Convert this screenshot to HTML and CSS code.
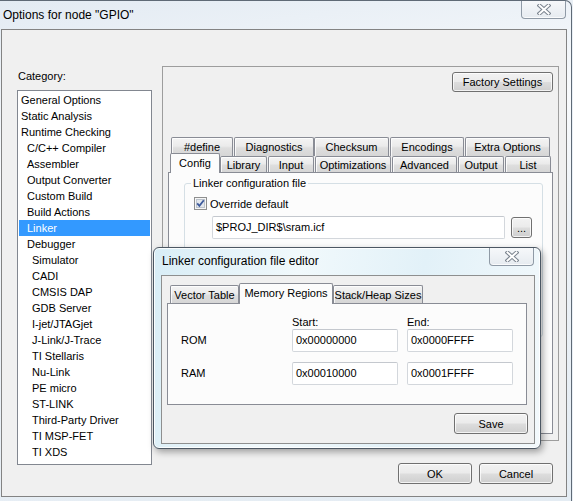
FILE: index.html
```html
<!DOCTYPE html>
<html>
<head>
<meta charset="utf-8">
<title>Options for node "GPIO"</title>
<link rel="stylesheet" href="styles.css">
</head>
<body>
<div class="frame">
  <div class="titlebar">
    <span class="title">Options for node "GPIO"</span>
    <div class="close">
      <svg width="14" height="11" viewBox="0 0 14 11"><path d="M2.5 1.5 L11.5 9.5 M11.5 1.5 L2.5 9.5" stroke="#7a838e" stroke-width="4" stroke-linecap="square" fill="none"/><path d="M2.5 1.5 L11.5 9.5 M11.5 1.5 L2.5 9.5" stroke="#ffffff" stroke-width="2" stroke-linecap="square" fill="none"/></svg>
    </div>
  </div>
  <div class="client">
    <div class="category">
      <div class="cat-label">Category:</div>
      <ul class="list">
        <li>General Options</li>
        <li>Static Analysis</li>
        <li>Runtime Checking</li>
        <li class="l1">C/C++ Compiler</li>
        <li class="l1">Assembler</li>
        <li class="l1">Output Converter</li>
        <li class="l1">Custom Build</li>
        <li class="l1">Build Actions</li>
        <li class="l1 sel">Linker</li>
        <li class="l1">Debugger</li>
        <li class="l2">Simulator</li>
        <li class="l2">CADI</li>
        <li class="l2">CMSIS DAP</li>
        <li class="l2">GDB Server</li>
        <li class="l2">I-jet/JTAGjet</li>
        <li class="l2">J-Link/J-Trace</li>
        <li class="l2">TI Stellaris</li>
        <li class="l2">Nu-Link</li>
        <li class="l2">PE micro</li>
        <li class="l2">ST-LINK</li>
        <li class="l2">Third-Party Driver</li>
        <li class="l2">TI MSP-FET</li>
        <li class="l2">TI XDS</li>
      </ul>
    </div>
    <div class="panel">
      <div class="panel-top"><button class="btn factory">Factory Settings</button></div>
      <div class="tabrow back">
        <div class="tab t-define">#define</div>
        <div class="tab t-diag">Diagnostics</div>
        <div class="tab t-check">Checksum</div>
        <div class="tab t-enc">Encodings</div>
        <div class="tab t-extra">Extra Options</div>
      </div>
      <div class="tabrow front">
        <div class="tab sel t-config">Config</div>
        <div class="tab t-lib">Library</div>
        <div class="tab t-input">Input</div>
        <div class="tab t-opt">Optimizations</div>
        <div class="tab t-adv">Advanced</div>
        <div class="tab t-out">Output</div>
        <div class="tab t-list">List</div>
      </div>
      <div class="page">
        <fieldset class="group">
          <legend>Linker configuration file</legend>
          <div class="check-row">
            <svg class="checkbox" width="13" height="13" viewBox="0 0 13 13"><rect x="0.5" y="0.5" width="12" height="12" fill="#f6f6f6" stroke="#8e8f8f"/><rect x="2.5" y="2.5" width="8" height="8" fill="#e3e7ec" stroke="#bcc3cc"/><path d="M3.2 6.4 L5.4 8.9 L9.8 3.2" fill="none" stroke="#3d5a9c" stroke-width="1.8"/></svg>
            <span>Override default</span>
          </div>
          <div class="path-row">
            <div class="field path">$PROJ_DIR$\sram.icf</div>
            <button class="btn dots">...</button>
          </div>
        </fieldset>
      </div>
    </div>
    <div class="footer">
      <button class="btn action">OK</button>
      <button class="btn action">Cancel</button>
    </div>
  </div>
</div>

<div class="dialog">
  <div class="dlg-title">
    <span class="title dlg-caption">Linker configuration file editor</span>
    <div class="close dlg-close">
      <svg width="14" height="11" viewBox="0 0 14 11"><path d="M2.5 1.5 L11.5 9.5 M11.5 1.5 L2.5 9.5" stroke="#7a838e" stroke-width="4" stroke-linecap="square" fill="none"/><path d="M2.5 1.5 L11.5 9.5 M11.5 1.5 L2.5 9.5" stroke="#ffffff" stroke-width="2" stroke-linecap="square" fill="none"/></svg>
    </div>
  </div>
  <div class="dlg-client">
    <div class="tabrow dlg-tabs">
      <div class="tab t-vec">Vector Table</div>
      <div class="tab sel t-mem">Memory Regions</div>
      <div class="tab t-stack">Stack/Heap Sizes</div>
    </div>
    <div class="page dlg-page">
      <div class="regions">
        <div></div>
        <div class="hdr">Start:</div>
        <div class="hdr">End:</div>
        <div class="rlabel">ROM</div>
        <div class="field">0x00000000</div>
        <div class="field">0x0000FFFF</div>
        <div class="rlabel ram">RAM</div>
        <div class="field ram">0x00010000</div>
        <div class="field ram">0x0001FFFF</div>
      </div>
    </div>
    <div class="dlg-footer"><button class="btn action">Save</button></div>
  </div>
</div>
</body>
</html>
```
FILE: styles.css
```css
* { box-sizing: border-box; }
html, body { margin: 0; padding: 0; }
body {
  width: 573px;
  height: 501px;
  overflow: hidden;
  position: relative;
  font-family: "Liberation Sans", Arial, sans-serif;
  font-size: 11px;
  color: #000;
  background: #e9eff5;
}
.frame {
  width: 572px;
  height: 501px;
  border-top: 1px solid #5f6a76;
  border-right: 1px solid #5f6a76;
  border-top-right-radius: 7px;
  background: linear-gradient(172deg, #e3ebf3 0%, #f8fafc 30%, #edf2f7 55%, #e4ecf3 100%);
}
.titlebar {
  height: 28px;
  display: flex;
  align-items: flex-start;
}
.title {
  font-size: 12px;
  line-height: 15px;
  padding: 7px 0 0 3px;
  color: #000;
}
.close {
  margin-left: auto;
  margin-right: 5px;
  width: 45px;
  height: 18px;
  border: 1px solid #8f9aa6;
  border-top: none;
  border-radius: 0 0 4px 4px;
  background: linear-gradient(#f6f8fa, #e6ebf0);
  box-shadow: inset 0 -1px 0 rgba(255,255,255,0.8);
  display: flex;
  align-items: center;
  justify-content: center;
}
.client {
  margin-left: 1px;
  width: 566px;
  height: 468px;
  border: 1px solid #838383;
  background: #f0f0f0;
  display: grid;
  grid-template-columns: 135px 397px;
  grid-template-rows: 375px auto;
  column-gap: 10px;
  padding: 36px 0 0 15px;
}
.category { grid-column: 1; grid-row: 1 / 3; }
.cat-label {
  height: 24px;
  padding-top: 4px;
  padding-left: 1px;
  line-height: 13px;
}
.list {
  list-style: none;
  margin: 0;
  padding: 1px 0 0;
  height: 375px;
  border: 1px solid #828790;
  background: #fff;
}
.list li {
  margin: 0 1px;
  height: 16px;
  line-height: 16px;
  padding-left: 2px;
  white-space: nowrap;
}
.list li.l1 { padding-left: 8px; }
.list li.l2 { padding-left: 13px; }
.list li.sel { background: #3399ff; color: #fff; }

.panel {
  grid-column: 2;
  grid-row: 1;
  border: 1px solid #9d9d9d;
  display: flex;
  flex-direction: column;
}
.panel-top {
  display: flex;
  justify-content: flex-end;
  padding: 5px 5px 0 0;
  margin-bottom: 45px;
}
.btn {
  font: inherit;
  color: #000;
  padding: 0;
  height: 21px;
  border: 1px solid #707070;
  border-radius: 3px;
  background: linear-gradient(#f2f2f2 0%, #ebebeb 48%, #dddddd 52%, #cfcfcf 100%);
  box-shadow: inset 0 0 0 1px rgba(255,255,255,0.75);
}
.factory { width: 101px; height: 20px; }
.action { width: 74px; }

.tabrow {
  display: flex;
  padding-left: 8px;
}
.tab {
  border: 1px solid #898c95;
  border-bottom: none;
  border-radius: 2px 2px 0 0;
  background: linear-gradient(#f4f4f4 0%, #ebebeb 45%, #dedede 55%, #d6d6d6 100%);
  box-shadow: inset 1px 1px 0 rgba(255,255,255,0.8);
  text-align: center;
  white-space: nowrap;
  flex: none;
}
.tabrow.back { height: 19px; }
.tabrow.back .tab { height: 19px; line-height: 18px; }
.tabrow.front {
  height: 16px;
  align-items: flex-end;
  padding-left: 7px;
  position: relative;
  z-index: 1;
}
.tabrow.front .tab { height: 16px; line-height: 16px; }
.tab.sel {
  background: #fcfcfc;
  box-shadow: none;
  position: relative;
  z-index: 2;
}
.tabrow.front .tab.sel { height: 20px; margin-bottom: -1px; line-height: 19px; }

.t-define { width: 62px; }
.t-diag { width: 80px; margin-left: 1px; }
.t-check { width: 75px; }
.t-enc { width: 74px; margin-left: 1px; }
.t-extra { width: 85px; margin-left: 1px; }
.t-config { width: 50px; }
.t-lib { width: 47px; }
.t-input { width: 46px; margin-left: 1px; }
.t-opt { width: 76px; margin-left: 1px; }
.t-adv { width: 65px; margin-left: 1px; }
.t-out { width: 46px; margin-left: 1px; }
.t-list { width: 46px; margin-left: 1px; }

.page {
  flex: 1;
  margin: 0 5px 6px 5px;
  border: 1px solid #898c95;
  background: #fcfcfc;
  overflow: hidden;
}
.group {
  margin: 4px 0 0 15px;
  width: 357px;
  height: 160px;
  padding: 0 10px 0 6px;
  border: 1px solid #d5dfe5;
  border-radius: 3px;
}
.group legend {
  padding: 0 2px;
  line-height: 13px;
}
.check-row {
  display: flex;
  align-items: center;
  gap: 3px;
  margin: 7px 0 0 3px;
  height: 13px;
}
.checkbox { display: block; }
.path-row {
  display: flex;
  align-items: center;
  gap: 6px;
  margin: 6px 0 0 21px;
}
.field {
  height: 23px;
  line-height: 21px;
  padding-left: 3px;
  border: 1px solid #d3d7dc;
  border-top-color: #c4c8ce;
  border-radius: 2px;
  background: #fff;
  white-space: nowrap;
}
.field.path { width: 293px; }
.dots { width: 21px; height: 21px; line-height: 14px; }

.footer {
  grid-column: 2;
  grid-row: 2;
  display: flex;
  justify-content: flex-end;
  gap: 7px;
  padding: 22px 6px 0 0;
}

.dialog {
  position: absolute;
  left: 153px;
  top: 247px;
  width: 388px;
  height: 202px;
  border: 1px solid #4c5763;
  border-radius: 6px;
  background: linear-gradient(100deg, #d8edf6 0%, #f1f9fc 35%, #e2f1f8 65%, #f3f9fc 100%);
  box-shadow: inset 0 0 0 1px rgba(255,255,255,0.85), 2px 3px 7px rgba(0,0,0,0.35);
}
.dlg-title {
  height: 27px;
  display: flex;
  align-items: flex-start;
}
.dlg-caption { padding: 6px 0 0 8px; }
.dlg-close { margin-right: 6px; }
.dlg-client {
  margin-left: 7px;
  width: 374px;
  height: 169px;
  border: 1px solid #8e8f8f;
  background: #f0f0f0;
  display: flex;
  flex-direction: column;
}
.dlg-tabs {
  margin-top: 9px;
  height: 18px;
  padding-left: 8px;
  align-items: flex-end;
  position: relative;
  z-index: 1;
}
.dlg-tabs .tab { height: 18px; line-height: 18px; }
.dlg-tabs .tab.sel { height: 21px; margin-bottom: -1px; line-height: 19px; }
.t-vec { width: 69px; }
.t-mem { width: 94px; }
.t-stack { width: 90px; }
.dlg-page {
  flex: none;
  margin: 0 0 0 5px;
  width: 360px;
  height: 102px;
}
.regions {
  display: grid;
  grid-template-columns: 102px 106px 106px;
  grid-template-rows: 13px 23px 33px;
  column-gap: 9px;
  padding: 12px 0 0 13px;
}
.regions .hdr { line-height: 13px; }
.regions .rlabel { line-height: 23px; }
.regions .ram { align-self: end; }
.dlg-footer {
  display: flex;
  justify-content: flex-end;
  padding: 8px 6px 0 0;
}
```
